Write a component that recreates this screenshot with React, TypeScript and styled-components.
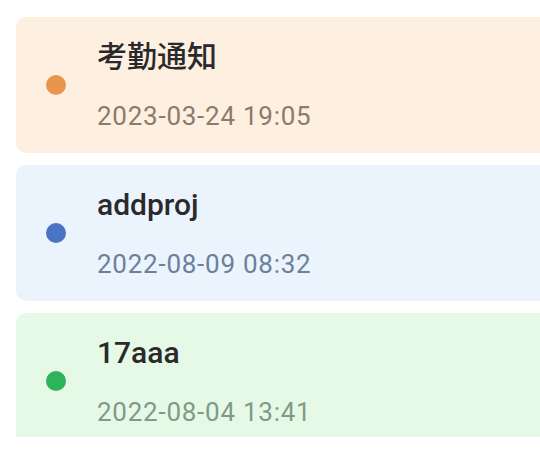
import React from "react";
import styled, { createGlobalStyle } from "styled-components";

const GlobalStyle = createGlobalStyle`
  html, body {
    margin: 0;
    padding: 0;
    background: #ffffff;
  }
  * {
    box-sizing: border-box;
  }
`;

const TONES: Record<string, { bg: string; dot: string; date: string }> = {
  orange: { bg: "#fdf0e1", dot: "#e8964e", date: "#8c7b69" },
  blue: { bg: "#ebf3fd", dot: "#4a72c5", date: "#6b819b" },
  green: { bg: "#e5f9e6", dot: "#2db45a", date: "#7e9b86" },
};

const notices = [
  { id: 1, title: "考勤通知", time: "2023-03-24 19:05", tone: "orange" },
  { id: 2, title: "addproj", time: "2022-08-09 08:32", tone: "blue" },
  { id: 3, title: "17aaa", time: "2022-08-04 13:41", tone: "green" },
];

const App = () => {
  return (
    <>
      <GlobalStyle />
      <StyledPage>
        <StyledScroller>
          <StyledList>
            {notices.map((item) => (
              <StyledCard key={item.id} $tone={item.tone}>
                <StyledDot $tone={item.tone} />
                <StyledBody>
                  <StyledTitle>{item.title}</StyledTitle>
                  <StyledTime $tone={item.tone}>{item.time}</StyledTime>
                </StyledBody>
              </StyledCard>
            ))}
          </StyledList>
        </StyledScroller>
      </StyledPage>
    </>
  );
};

export default App;

const StyledPage = styled.div`
  width: 540px;
  height: 452px;
  background: #ffffff;
  overflow: hidden;
`;

const StyledScroller = styled.div`
  height: 437px;
  overflow: hidden;
  padding: 17px 0 0 16px;
`;

const StyledList = styled.div`
  display: flex;
  flex-direction: column;
  row-gap: 12px;
  margin-right: -20px;
`;

const StyledCard = styled.div<{ $tone: string }>`
  height: 136px;
  display: flex;
  align-items: center;
  padding-left: 30px;
  border-radius: 10px;
  background-color: ${(p) => TONES[p.$tone].bg};
`;

const StyledDot = styled.span<{ $tone: string }>`
  width: 20px;
  height: 20px;
  border-radius: 50%;
  flex-shrink: 0;
  background-color: ${(p) => TONES[p.$tone].dot};
`;

const StyledBody = styled.div`
  margin-left: 31px;
  display: flex;
  flex-direction: column;
  row-gap: 26px;
`;

const StyledTitle = styled.div`
  font-family: Roboto, "Noto Sans CJK SC", sans-serif;
  font-size: 30px;
  font-weight: 500;
  line-height: 36px;
  color: #2a2a2c;
`;

const StyledTime = styled.div<{ $tone: string }>`
  font-family: Roboto, sans-serif;
  font-size: 26px;
  line-height: 30px;
  letter-spacing: 0.75px;
  color: ${(p) => TONES[p.$tone].date};
`;
